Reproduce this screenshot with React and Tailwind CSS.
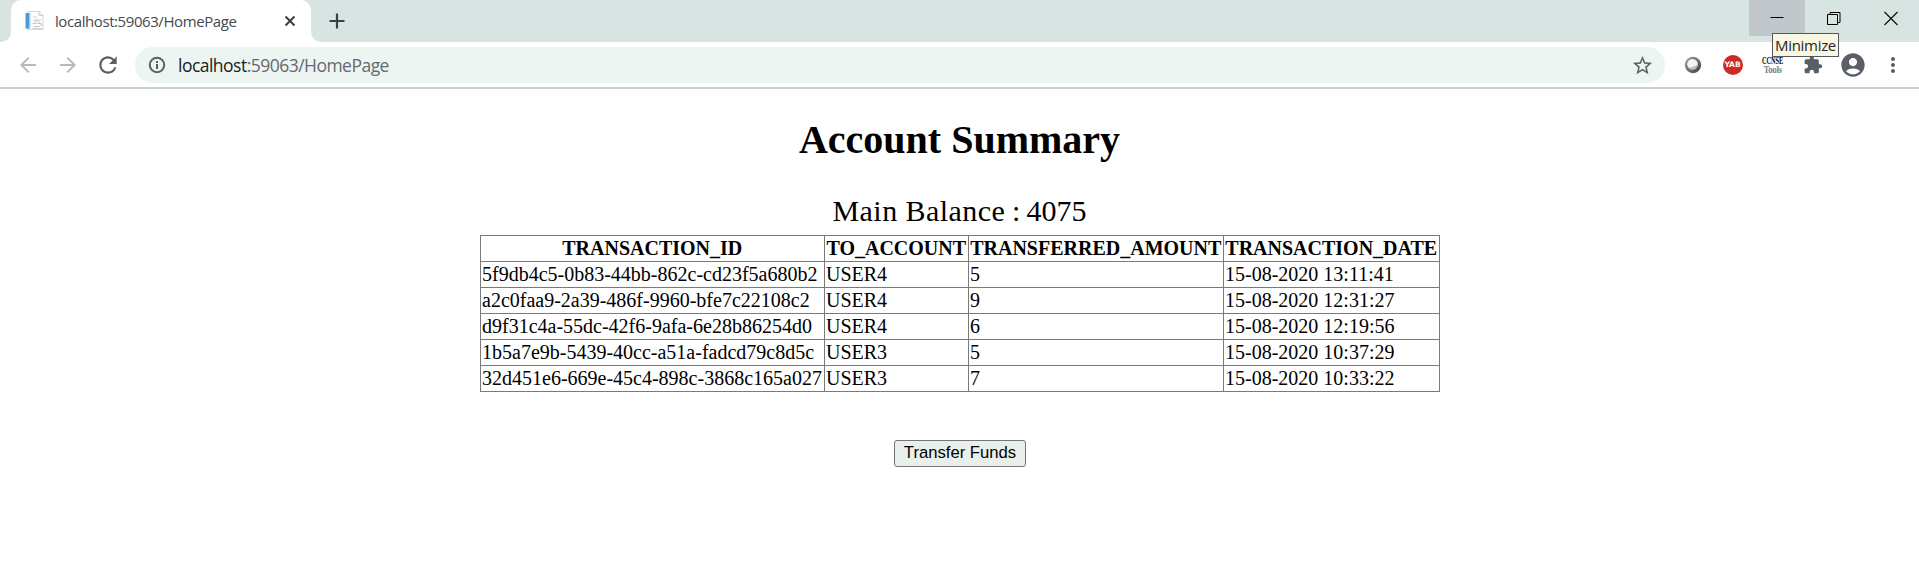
import React from "react";
import {
  MdArrowBack,
  MdArrowForward,
  MdRefresh,
  MdStarBorder,
  MdExtension,
  MdAccountCircle,
  MdMoreVert,
} from "react-icons/md";

const rows = [
  ["5f9db4c5-0b83-44bb-862c-cd23f5a680b2", "USER4", "5", "15-08-2020 13:11:41"],
  ["a2c0faa9-2a39-486f-9960-bfe7c22108c2", "USER4", "9", "15-08-2020 12:31:27"],
  ["d9f31c4a-55dc-42f6-9afa-6e28b86254d0", "USER4", "6", "15-08-2020 12:19:56"],
  ["1b5a7e9b-5439-40cc-a51a-fadcd79c8d5c", "USER3", "5", "15-08-2020 10:37:29"],
  ["32d451e6-669e-45c4-898c-3868c165a027", "USER3", "7", "15-08-2020 10:33:22"],
];

const headers = ["TRANSACTION_ID", "TO_ACCOUNT", "TRANSFERRED_AMOUNT", "TRANSACTION_DATE"];

function PageIcon() {
  return (
    <svg width="20" height="20" viewBox="0 0 20 20" className="shrink-0">
      <path d="M2.500.5h11.500l4 3.500v14.500h-15.500z" fill="#fdfdfd" stroke="#d5d8d8" />
      <path d="M14 .5v4h4" fill="#eef0f0" stroke="#c9cccc" />
      <rect x="0.500" y="2" width="4" height="15.500" fill="#4a9ad8" />
      <rect x="4.500" y="2" width="1" height="15.500" fill="#a8cdec" />
      <path d="M8 6h4M8 9h8M7.500 12.500h9M7.500 17.500h10" stroke="#cdd2d2" />
      <path d="M9 12l3-3 2 2 3 4" fill="none" stroke="#d8b9b4" />
      <path d="M9 15.500h6" stroke="#b9c6bd" />
    </svg>
  );
}

function InfoIcon() {
  return (
    <svg width="20" height="20" viewBox="0 0 20 20" fill="none" stroke="currentColor" strokeWidth="2" className="shrink-0">
      <circle cx="10" cy="10" r="7.200" />
      <path d="M10 9v5M10 6v2" />
    </svg>
  );
}

function TabStrip() {
  return (
    <div className="flex h-[42px] bg-[#d7e4e2]">
      <div className="flex w-[11px] items-end overflow-hidden bg-white">
        <div className="h-full w-full rounded-br-[10px] bg-[#d7e4e2]" />
      </div>
      <div className="flex w-[300px] items-center rounded-t-[10px] bg-white pl-[14px]">
        <PageIcon />
        <span className="ml-[10px] w-[182px] whitespace-nowrap text-[15px] leading-5 tracking-[-0.42px] text-[#45494e]">
          localhost:59063/HomePage
        </span>
        <svg width="12" height="12" viewBox="0 0 12 12" className="ml-[47px]">
          <path d="M1.500 1.500l9 9M10.500 1.500l-9 9" stroke="#3c4043" strokeWidth="2" />
        </svg>
      </div>
      <div className="flex flex-1 bg-white">
        <div className="flex flex-1 justify-between rounded-bl-[10px] bg-[#d7e4e2]">
          <svg width="16" height="16" viewBox="0 0 16 16" className="ml-[18px] mt-[13px]">
            <path d="M8 .5v15M.5 8h15" stroke="#3c4043" strokeWidth="2.200" />
          </svg>
          <div className="flex h-9">
            <div className="flex w-14 justify-center bg-[#c1c7cb]">
              <svg width="14" height="36">
                <path d="M.5 17.500h13" stroke="#000" />
              </svg>
            </div>
            <div className="flex w-[57px] justify-center">
              <svg width="14" height="36" fill="none" stroke="#000">
                <path d="M.5 14.500h10v10h-10zM3 14.500v-2h10v10h-2.500" />
              </svg>
            </div>
            <div className="flex w-[57px] justify-center">
              <svg width="14" height="36">
                <path d="M.5 12l13 13M13.500 12l-13 13" stroke="#111" strokeWidth="1.200" />
              </svg>
            </div>
          </div>
        </div>
      </div>
    </div>
  );
}

function Cell({ children }) {
  return <div className="flex h-10 w-10 shrink-0 items-center justify-center">{children}</div>;
}

function Toolbar() {
  return (
    <div className="flex h-[47px] items-start border-b-2 border-[#c9d1d0] bg-white pl-[7.5px] text-[#5a5e66]">
      <div className="flex h-[45px] w-[127.5px] items-center">
        <Cell>
          <MdArrowBack size={24} color="#b7babd" />
        </Cell>
        <Cell>
          <MdArrowForward size={24} color="#b7babd" />
        </Cell>
        <Cell>
          <MdRefresh size={26} />
        </Cell>
      </div>
      <div className="mt-[5px] flex h-9 w-[1530px] items-center rounded-full bg-[#ecf5f2] pl-[12px] pr-[11px]">
        <InfoIcon />
        <span className="ml-[11px] whitespace-nowrap text-[17.500px] leading-6 tracking-[-0.52px] text-[#66686f]">
          <span className="text-[#1b1c20]">localhost</span>:59063/HomePage
        </span>
        <MdStarBorder size={23} className="ml-auto" />
      </div>
      <div className="ml-[7.5px] flex h-[45px] items-center">
        <Cell>
          <svg width="18" height="18" viewBox="0 0 18 18">
            <defs>
              <linearGradient id="ring" x1="0" y1="0" x2="1" y2="1">
                <stop offset="0" stopColor="#a5a5a5" />
                <stop offset="1" stopColor="#3e3e3e" />
              </linearGradient>
            </defs>
            <circle cx="9" cy="9" r="8.200" fill="url(#ring)" />
            <circle cx="8.500" cy="8.300" r="5.300" fill="#f3f5f5" />
            <path d="M4.500 11.300a5.300 5.300 0 0 0 9.200-3.500c-1.500 2.500-5 4-9.200 3.500z" fill="#b5b8b8" />
          </svg>
        </Cell>
        <Cell>
          <div className="flex h-5 w-5 items-center justify-center rounded-full bg-[#cc2a22] font-['DejaVu_Sans',sans-serif] text-[7.500px] font-bold leading-none text-white">
            YAB
          </div>
        </Cell>
        <Cell>
          <div className="flex h-5 w-5 flex-col items-center justify-center font-['Liberation_Serif',serif] leading-[9px]">
            <span className="scale-x-[0.78] scale-y-125 text-[8px] font-bold text-black">CCNSE</span>
            <span className="scale-y-125 text-[9px] font-bold tracking-[-0.4px] text-[#7d8484]">Tools</span>
          </div>
        </Cell>
        <Cell>
          <MdExtension size={20} />
        </Cell>
        <Cell>
          <MdAccountCircle size={28} />
        </Cell>
        <Cell>
          <MdMoreVert size={24} />
        </Cell>
      </div>
    </div>
  );
}

export default function App() {
  return (
    <div className="relative h-[565px] w-[1919px] overflow-hidden bg-white font-['Open_Sans',sans-serif]">
      <TabStrip />
      <Toolbar />
      <div className="absolute left-[1772px] top-[33px] flex h-6 w-[67px] items-center justify-center border border-[#57555c] bg-[#f8f8e2] text-[15px] leading-none tracking-[-0.3px] text-[#26262c]">
        Minimize
      </div>
      <main className="flex flex-col items-center font-['Liberation_Serif',serif] text-[20px] leading-[23px] text-black">
        <h1 className="mt-[28px] text-[40px] font-bold leading-[46px]">Account Summary</h1>
        <div className="mt-[30px] whitespace-pre text-[30px] leading-[36px]">
          <span className="tracking-[0.45px]">Main Balance</span>
          <span className="tracking-[-0.7px]"> : </span>
          <span>4075</span>
        </div>
        <table className="mt-[6px] w-[960px] table-fixed border-collapse border border-[#7a7a7a]">
          <colgroup>
            <col className="w-[344px]" />
            <col className="w-[144px]" />
            <col className="w-[255px]" />
            <col className="w-[216px]" />
          </colgroup>
          <thead>
            <tr className="h-[26px]">
              {headers.map((h) => (
                <th
                  key={h}
                  className="whitespace-nowrap border border-[#7a7a7a] py-px pl-px pr-[0.5px] text-center font-bold"
                >
                  {h}
                </th>
              ))}
            </tr>
          </thead>
          <tbody>
            {rows.map((r) => (
              <tr key={r[0]} className="h-[26px]">
                {r.map((c, i) => (
                  <td key={i} className="whitespace-nowrap border border-[#7a7a7a] py-px pl-[1.5px] pr-0">
                    {c}
                  </td>
                ))}
              </tr>
            ))}
          </tbody>
        </table>
        <button className="mt-[48px] h-[27px] w-[132px] rounded-[3px] border border-[#767676] bg-[#e9f0ec] pl-px font-['Liberation_Sans',sans-serif] text-[16.670px] leading-none text-black">
          Transfer Funds
        </button>
      </main>
    </div>
  );
}
